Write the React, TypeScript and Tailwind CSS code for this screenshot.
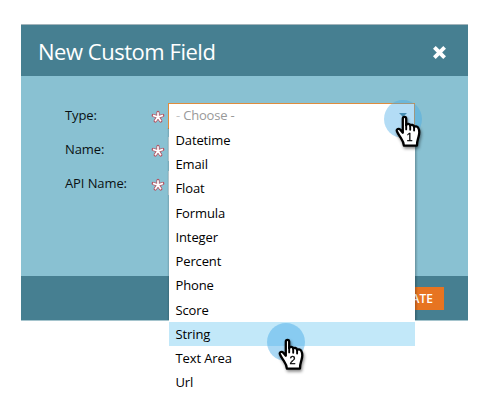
import React from "react";

const options = [
  "Datetime", "Email", "Float", "Formula", "Integer", "Percent",
  "Phone", "Score", "String", "Text Area", "Url",
];

function Star() {
  return (
    <svg width="14" height="14" viewBox="0 0 14 14" className="mt-[3px] shrink-0 overflow-visible">
      <g fill="none">
        <path d="M7 7V2.4M7 7L2.2 5.5M7 7L11.8 5.5M7 7L4.2 11M7 7L9.8 11" stroke="#c03a48" strokeWidth="3.2" strokeLinecap="round" opacity=".8" style={{ filter: "blur(0.6px)" }} />
        <path d="M7 7V2.2M7 7L2 5.4M7 7L12 5.4M7 7L4.1 11.2M7 7L9.9 11.2" stroke="#fff" strokeWidth="1.7" />
      </g>
    </svg>
  );
}

function Hand({ label }: { label: string }) {
  return (
    <svg width="28" height="35" viewBox="0 0 28 35" className="block overflow-visible drop-shadow-[1px_2px_1.5px_rgba(0,0,0,0.45)]">
      <path
        d="M7.8 3.6C7.8 1.2 11.2 1.2 11.2 3.6V10.2C11.8 8.2 15 8.4 15.2 10.7C16 9.3 18.8 9.7 19.1 12.1C20 10.8 22.4 11.2 23.2 12.8C24.4 15 24.5 19 23.4 22.4C22.9 24.3 22 25.7 22 30.6H8.9C8.7 27.7 7.6 25.6 5.7 22.7C4.4 20.7 2.8 18.4 1.9 16.2C1.2 14.2 3.8 13 5.3 14.7L7.8 17.7Z"
        fill="#fff" stroke="#000" strokeWidth="2.3" strokeLinejoin="round"
      />
      <path d="M11.2 9.5V14.4M15.2 10.5V14.8M19.1 12V15.6" stroke="#000" strokeWidth="1.9" strokeLinecap="round" />
      <text x="14.6" y="26.4" textAnchor="middle" fontSize="11" fontFamily="Liberation Sans, sans-serif" fill="#000" stroke="#000" strokeWidth="0.3">{label}</text>
    </svg>
  );
}

function Field({ label, children }: { label: string; children?: React.ReactNode }) {
  return (
    <div className="flex h-6 items-center">
      <label className="w-[86px] text-[13px] leading-6 tracking-[-0.1px] text-[#0a1113]">{label}</label>
      <Star />
      <div className="ml-[3px] h-6 w-[247px]">{children ?? <div className="h-full w-[240px] border border-[#c9dde3] bg-white" />}</div>
    </div>
  );
}

export default function App() {
  return (
    <div className="relative h-[412px] w-[494px] overflow-hidden bg-white pt-6 pl-[21px] font-['Open_Sans','Noto_Sans',sans-serif]">
      <div className="flex h-[297px] w-[447px] flex-col border-t border-b border-t-[#a3b4bb] border-b-[#a5c4cd] bg-[#89c1d2]">
        <header className="flex h-[51px] shrink-0 items-center justify-between bg-[#467f91] pr-[21px] pl-[17px]">
          <h1 className="mt-px text-[22px] leading-8 tracking-[-0.47px] text-white">New Custom Field</h1>
          <svg width="15" height="15" viewBox="0 0 15 15" className="mt-[3px]">
            <path d="M3.7 3.7L11.3 11.3M11.3 3.7L3.7 11.3" stroke="#fff" strokeWidth="3.8" strokeLinecap="square" />
          </svg>
        </header>
        <main className="flex flex-1 flex-col gap-[10px] pt-[27px] pl-11">
          <Field label="Type:">
            <div className="flex h-[26px] items-start justify-between border border-[#df8c3d] bg-white pr-[7px] pl-[7px]">
              <span className="text-[13px] leading-[23px] tracking-[-0.2px] text-[#999]"><span className="text-[#c4c4c4]">-</span> Choose -</span>
              <span className="mt-[9px] h-0 w-0 border-x-4 border-t-4 border-x-transparent border-t-[#4c7d92]" />
            </div>
          </Field>
          <Field label="Name:" />
          <Field label="API Name:" />
        </main>
        <footer className="flex h-[44px] shrink-0 items-center justify-end bg-[#467f91] pr-6">
          <button className="h-[23px] w-[68px] bg-[#e77421] pr-[11px] text-right text-[12px] leading-[23px] font-semibold text-white">CREATE</button>
        </footer>
      </div>

      <ul className="absolute top-[128px] left-[169px] h-[270px] w-[246px] bg-white">
        {options.map((o) => (
          <li key={o} className={`h-[24.22px] pl-[6.5px] text-[13px] leading-[25px] tracking-[-0.12px] text-black ${o === "String" ? "bg-[#c2e8f9]" : ""}`}>{o}</li>
        ))}
      </ul>
      <div className="absolute top-[128px] left-[167px] h-[192px] w-[2px] bg-linear-to-r from-transparent to-black/15" />
      <div className="absolute top-[128px] left-[415px] h-[192px] w-[3px] bg-linear-to-r from-black/25 to-transparent" />

      <div className="absolute top-[100px] left-[384px] size-[38px] rounded-full bg-[#42a8e6]/40" />
      <div className="absolute top-[115px] left-[395px]"><Hand label="1" /></div>
      <div className="absolute top-[323px] left-[267px] size-[38px] rounded-full bg-[#42a8e6]/45" />
      <div className="absolute top-[338px] left-[278px]"><Hand label="2" /></div>
    </div>
  );
}
